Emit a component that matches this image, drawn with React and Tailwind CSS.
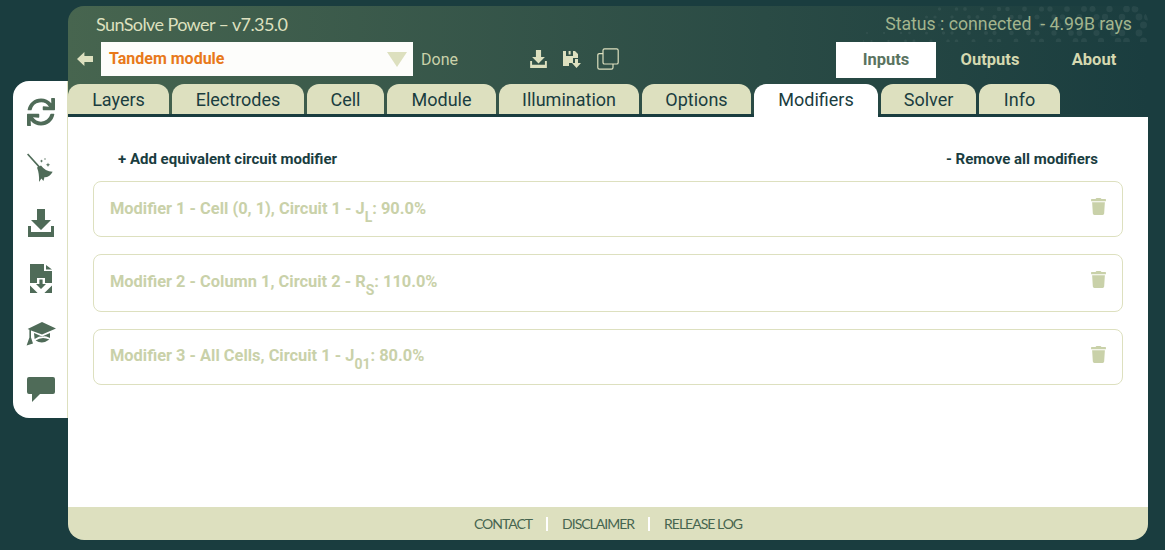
import React from "react";
import { FaSync, FaTrash } from "react-icons/fa";

const TABS = [
  { name: "Layers", w: "w-[101px]" },
  { name: "Electrodes", w: "w-[132px]" },
  { name: "Cell", w: "w-[77px]" },
  { name: "Module", w: "w-[109px]" },
  { name: "Illumination", w: "w-[140px]" },
  { name: "Options", w: "w-[109px]" },
  { name: "Modifiers", w: "w-[124px]", active: true },
  { name: "Solver", w: "w-[95px]" },
  { name: "Info", w: "w-[81px]" },
];

const BroomIcon = () => (
  <svg viewBox="0 0 30 30" className="h-[30px] w-[30px]" fill="#4f6b58">
    <path d="M1 1.6 L2.2 0.6 L14 13.4 L12.6 14.6 Z" />
    <path d="M11 14.4 L15 12.4 Q19 18 26.7 18.7 Q23 25 18.6 24 L17.4 28 L15.4 25.4 L13 29 Q13.6 21 11 14.4 Z" />
    <path d="M22 9.6 l0.6 1.6 1.6 0.6 -1.6 0.6 -0.6 1.6 -0.6 -1.6 -1.6 -0.6 1.6 -0.6 Z" />
    <path d="M15.5 6.4 l0.5 1.2 1.2 0.5 -1.2 0.5 -0.5 1.2 -0.5 -1.2 -1.2 -0.5 1.2 -0.5 Z" />
    <circle cx="19" cy="6" r="0.7" />
  </svg>
);

const DownloadIcon = ({ className, fill }) => (
  <svg viewBox="0 0 26 28" className={className} fill={fill}>
    <path d="M9 0 H17 V11 H23 L13 21 L3 11 H9 Z" />
    <path d="M0 17 H3 V23 H23 V17 H26 V28 H0 Z" />
  </svg>
);

const FileDownIcon = () => (
  <svg viewBox="0 0 22 29" className="h-[29px] w-[22px]">
    <path d="M0 0 H14 V7 H22 V29 H0 Z" fill="#4f6b58" />
    <path d="M16 1 L22 5.6 H16 Z" fill="#4f6b58" />
    <path d="M0 19 H7 V14 H15 V19 H22 V21.4 L14.4 29 H7.6 L0 21.4 Z" fill="#ffffff" />
    <path d="M9.4 15.6 H12.6 V20 H16 L11 25 L6 20 H9.4 Z" fill="#4f6b58" />
  </svg>
);

const CapIcon = () => (
  <svg viewBox="0 0 30 24" className="h-[24px] w-[30px]" fill="#4f6b58">
    <path d="M16 0 L30 6.4 L16 12.6 L5 8.6 V15.4 L7 21.6 L0.6 23.6 L3.4 15.4 V7.8 L1.6 7 Z" />
    <path d="M8 11 L16 14.4 L24 11 V16 Q16 11.6 8.6 17 Z" />
    <path d="M9.6 18.6 Q16 13.8 23.4 17.6 Q16.6 22.8 9.6 18.6 Z" />
  </svg>
);

const ChatIcon = () => (
  <svg viewBox="0 0 28 25" className="h-[25px] w-[28px]" fill="#4f6b58">
    <path d="M2 0 H26 Q28 0 28 2 V15 Q28 17 26 17 H13 L5 25 V17 H2 Q0 17 0 15 V2 Q0 0 2 0 Z" />
  </svg>
);

const BackArrow = () => (
  <svg viewBox="0 0 16 14" className="h-[14px] w-[16px]" fill="#dde0bf">
    <path d="M7.4 0 V4 H16 V10 H7.4 V14 L0 7 Z" />
  </svg>
);

const SaveDownIcon = () => (
  <svg viewBox="0 0 18 18" className="h-[18px] w-[18px]" fill="#dde0bf">
    <path d="M0 1 H12 L15 4 V8 H10 V13 H6 V16 H0 Z M3 1 V6 H10 V1 H7.6 V4.5 H5.6 V1 Z" fillRule="evenodd" />
    <path d="M12 9 H15 V13 H18 L13.5 18 L9 13 H12 Z" />
  </svg>
);

const CopyIcon = () => (
  <svg viewBox="0 0 22 22" className="h-[22px] w-[22px]" fill="none" stroke="#dde0bf" strokeWidth="1.2">
    <rect x="6" y="0.8" width="15.2" height="15.2" rx="1.6" />
    <path d="M6 5.6 H2.4 Q0.8 5.6 0.8 7.2 V19.6 Q0.8 21.2 2.4 21.2 H14.4 Q16 21.2 16 19.6 V16" />
  </svg>
);

const Dots = () => {
  const dots = [];
  for (let i = 0; i < 34; i++) {
    for (let j = 0; j < 5; j++) {
      if ((i * 7 + j * 13) % 5 > 1 && i + j * 3 > 8) {
        dots.push(<circle key={i + "-" + j} cx={i * 8.5 + (j % 2) * 4} cy={j * 8 + 3} r={1 + (i / 34) * 2.6} />);
      }
    }
  }
  return (
    <svg className="absolute right-0 top-0 h-[36px] w-[285px]" viewBox="0 0 285 36" fill="#ffffff" fillOpacity="0.06">
      {dots}
    </svg>
  );
};

const ModifierCard = ({ label, sub, value, h, top }) => (
  <div className={`flex ${h} items-start justify-between rounded-lg border border-[#dde0bf] pl-4 pr-4`}>
    <p className={`${top} text-[16.4px] font-bold leading-5 text-[#c9d1a9]`}>
      {label}
      <sub className="align-[-4px] text-[14px] leading-none">{sub}</sub>: {value}
    </p>
    <FaTrash className="mt-4 h-[17px] w-[15px] text-[#c9d1a9]" />
  </div>
);

export default function App() {
  return (
    <div className="flex h-[550px] w-[1165px] overflow-hidden bg-[#1a3d3f] font-['Roboto',sans-serif]">
      {/* left tool strip */}
      <div className="mt-[81px] ml-[13px] flex h-[337px] w-[55px] flex-col items-center rounded-l-2xl border-r border-[#dde0bf] bg-white pl-px pt-[3px]">
        <div className="flex h-[56px] items-center"><FaSync className="h-[28px] w-[28px] text-[#4f6b58]" /></div>
        <div className="flex h-[56px] items-center"><BroomIcon /></div>
        <div className="flex h-[54px] items-center"><DownloadIcon className="h-[28px] w-[26px]" fill="#4f6b58" /></div>
        <div className="flex h-[56px] items-center"><FileDownIcon /></div>
        <div className="flex h-[56px] items-center"><CapIcon /></div>
        <div className="flex h-[54px] items-center"><ChatIcon /></div>
      </div>

      <div className="mt-[6px] flex h-[534px] w-[1080px] flex-col overflow-hidden rounded-2xl">
        {/* header */}
        <div className="relative h-[111px] bg-gradient-to-r from-[#47654f] to-[#1a3d3f]">
          <Dots />
          <div className="relative flex h-[36px] items-center justify-between pl-7 pr-4">
            <span className="font-['Lato',sans-serif] text-lg tracking-[-0.6px] text-[#dde0bf]">SunSolve Power – v7.35.0</span>
            <span className="text-[17.7px] text-[#a3b58e]">Status : connected &nbsp;- 4.99B rays</span>
          </div>
          <div className="relative flex h-[42px] items-start">
            <div className="flex h-[34px] w-[33px] items-center justify-center">
              <BackArrow />
            </div>
            <div className="flex h-[34px] w-[312px] items-center justify-between bg-[#fdfdfb] pl-2 pr-[6px]">
              <span className="text-base font-bold text-[#e8791a]">Tandem module</span>
              <span className="h-0 w-0 border-x-[10px] border-t-[15px] border-x-transparent border-t-[#dde0bf]" />
            </div>
            <span className="ml-2 mt-[6px] w-[109px] text-base text-[#c9d1a9]">Done</span>
            <div className="flex h-[34px] items-center gap-[16px]">
              <DownloadIcon className="h-[18px] w-[17px]" fill="#dde0bf" />
              <SaveDownIcon />
              <CopyIcon />
            </div>
            <div className="ml-auto mr-[4px] flex">
              <div className="flex h-[36px] w-[100px] items-center justify-center bg-white text-[16.5px] font-bold text-[#5a7360]">Inputs</div>
              <div className="flex h-[36px] w-[108px] items-center justify-center text-[16.5px] font-bold text-[#d5d9b0]">Outputs</div>
              <div className="flex h-[36px] w-[100px] items-center justify-center text-[16.5px] font-bold text-[#d5d9b0]">About</div>
            </div>
          </div>
          {/* tabs */}
          <div className="absolute bottom-0 left-0 flex h-[33px] gap-[3px] border-b-[3px] border-[#1a3d3f]">
            {TABS.map((tab) => (
              <div
                key={tab.name}
                className={`flex items-center justify-center rounded-t-xl text-lg text-[#1a3d3f] ${tab.w} ${
                  tab.active ? "-mb-[3px] h-[33px] bg-white pb-px" : "h-[30px] bg-[#dde0bf] pt-px"
                }`}
              >
                {tab.name}
              </div>
            ))}
          </div>
        </div>

        {/* modifiers */}
        <div className="flex-1 bg-white px-[25px] pt-[33px]">
          <div className="flex justify-between px-[25px] text-[15px] font-bold leading-[18px] text-[#1a3d3f]">
            <span>+ Add equivalent circuit modifier</span>
            <span>- Remove all modifiers</span>
          </div>
          <div className="mt-[13px] flex flex-col gap-[17px]">
            <ModifierCard label="Modifier 1 - Cell (0, 1), Circuit 1 - J" sub="L" value="90.0%" h="h-[56px]" top="mt-[17px]" />
            <ModifierCard label="Modifier 2 - Column 1, Circuit 2 - R" sub="S" value="110.0%" h="h-[58px]" top="mt-[17px]" />
            <ModifierCard label="Modifier 3 - All Cells, Circuit 1 - J" sub="01" value="80.0%" h="h-[56px]" top="mt-[16px]" />
          </div>
        </div>

        {/* footer */}
        <div className="flex h-[33px] items-center justify-center bg-[#dde0bf] font-['Lato',sans-serif] text-sm tracking-[-1px] text-[#47654f]">
          <span>CONTACT</span>
          <span className="mx-[14px] h-[14px] w-[2px] bg-white" />
          <span>DISCLAIMER</span>
          <span className="mx-[14px] h-[14px] w-[2px] bg-white" />
          <span>RELEASE LOG</span>
        </div>
      </div>
    </div>
  );
}
